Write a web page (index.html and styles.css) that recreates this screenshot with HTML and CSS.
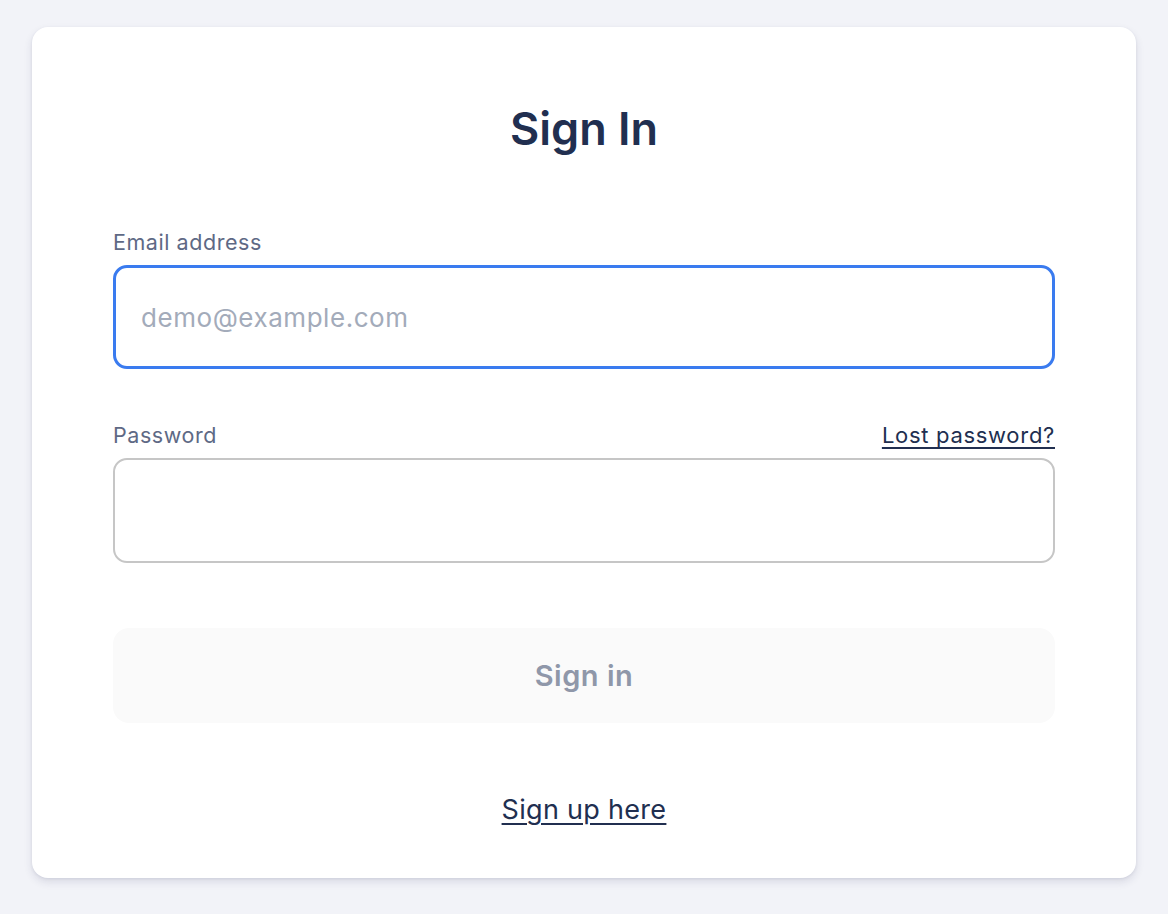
FILE: index.html
```html
<!DOCTYPE html>
<html>
<head>
<meta charset="utf-8">
<link rel="stylesheet" href="styles.css">
</head>
<body>
<main class="page">
  <form class="card">
    <h1 class="title">Sign In</h1>
    <div class="field">
      <label class="label" for="email">Email address</label>
      <input class="input input-focus" id="email" type="email" placeholder="demo@example.com">
    </div>
    <div class="field field-pw">
      <div class="label-row">
        <label class="label" for="pw">Password</label>
        <a class="link small" href="#">Lost password?</a>
      </div>
      <input class="input input-pw" id="pw" type="password">
    </div>
    <button class="btn" type="button">Sign in</button>
    <div class="footer"><a class="link big" href="#">Sign up here</a></div>
  </form>
</main>
</body>
</html>
```
FILE: styles.css
```css
* { box-sizing: border-box; }
html, body { margin: 0; padding: 0; }
body {
  background: #f2f3f8;
  font-family: Inter, "Noto Sans", sans-serif;
  width: 1168px;
  height: 914px;
  overflow: hidden;
}
.page {
  padding: 27px 32px 0 32px;
}
.card {
  background: #fff;
  border-radius: 16px;
  height: 851px;
  box-shadow: 0 4px 8px rgba(40, 45, 90, 0.12), 0 1px 3px rgba(40, 45, 90, 0.08);
  padding: 74px 81px 0 81px;
  display: flex;
  flex-direction: column;
}
.title {
  margin: 0;
  text-align: center;
  font-size: 45px;
  font-weight: 600;
  color: #212f50;
  line-height: 56px;
}
.field { display: flex; flex-direction: column; margin-top: 71px; }
.field-pw { margin-top: 52px; }
.label {
  font-size: 21.5px;
  letter-spacing: 0.55px;
  color: #5e6985;
  line-height: 28px;
  margin-bottom: 9px;
}
.label-row {
  display: flex;
  justify-content: space-between;
  align-items: baseline;
}
.input {
  height: 104px;
  border: 2px solid #c6c6c6;
  border-radius: 14px;
  padding: 0 25px;
  font-family: inherit;
  font-size: 26px;
  letter-spacing: 0.55px;
  color: #212f50;
  background: #fff;
  outline: none;
}
.input-pw { height: 105px; }
.input-focus {
  border: 3px solid #3a7bef;
}
.input::placeholder { color: #a3abba; }
.link {
  color: #212f50;
  text-decoration: underline;
  text-underline-offset: 4px;
}
.link.small { font-size: 22px; letter-spacing: 0.7px; line-height: 28px; }
.btn {
  margin-top: 65px;
  height: 95px;
  border: none;
  border-radius: 16px;
  background: #fafafa;
  color: #8f97a9;
  font-family: inherit;
  font-size: 29px;
  letter-spacing: 0.5px;
  font-weight: 600;
}
.footer {
  margin-top: 70px;
  text-align: center;
}
.link.big { font-size: 27px; letter-spacing: 0.3px; line-height: 34px; }
```
